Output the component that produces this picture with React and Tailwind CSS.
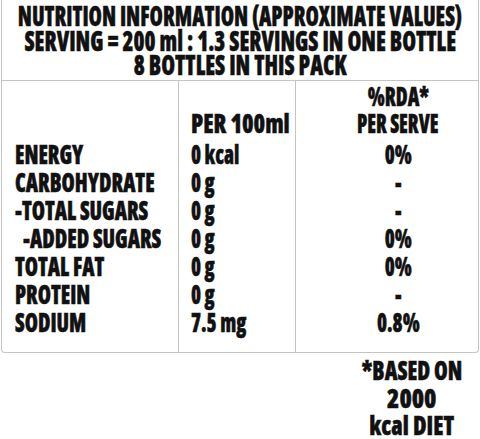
const rows = [
  { label: "ENERGY", per100: "0 kcal", rda: "0%" },
  { label: "CARBOHYDRATE", per100: "0 g", rda: "-" },
  { label: "-TOTAL SUGARS", per100: "0 g", rda: "-" },
  { label: "-ADDED SUGARS", per100: "0 g", rda: "0%", indent: true },
  { label: "TOTAL FAT", per100: "0 g", rda: "0%" },
  { label: "PROTEIN", per100: "0 g", rda: "-" },
  { label: "SODIUM", per100: "7.5 mg", rda: "0.8%" },
];

// the face is squeezed horizontally to get the condensed look
const squeeze = {
  title: "scale-x-[0.743]",
  sub: "scale-x-[0.77]",
  label: "scale-x-[0.82]",
  value: "scale-x-[0.78]",
  head: "scale-x-[0.9]",
  serve: "scale-x-[0.76]",
  note: "scale-x-[0.85]",
  num: "scale-x-[0.96]",
  diet: "scale-x-[0.89]",
};

function Left({ s = "value", children }) {
  return <span className={`inline-block origin-left ${squeeze[s]}`}>{children}</span>;
}

function Mid({ s = "value", children }) {
  return (
    <div className="flex justify-center">
      <span className={`inline-block origin-center ${squeeze[s]}`}>{children}</span>
    </div>
  );
}

export default function App() {
  return (
    <div
      className="w-[480px] h-[439px] bg-white text-[#111] font-extrabold font-stretch-condensed [-webkit-text-stroke:0.5px_#111] overflow-hidden whitespace-nowrap"
      style={{ fontFamily: '"Open Sans", "Open Sans Condensed", sans-serif' }}
    >
      <div className="ml-[1px] w-[478px] border-x border-b border-[#c4c4c4] rounded-b-[4px]">
        {/* title block */}
        <div className="h-[81px] border-b border-[#c4c4c4] pt-[3px] text-[29px] leading-[24.5px]">
          <Mid s="title">NUTRITION INFORMATION (APPROXIMATE VALUES)</Mid>
          <Mid s="sub">SERVING = 200 ml : 1.3 SERVINGS IN ONE BOTTLE</Mid>
          <Mid s="sub">8 BOTTLES IN THIS PACK</Mid>
        </div>

        <div className="grid grid-cols-[176px_117px_1fr] text-[26px] leading-[28px]">
          {/* column labels */}
          <div />
          <div className="flex items-end border-l border-[#c4c4c4] pl-[12px] pt-[2px] pb-[3px] leading-[27px]">
            <Left s="head">PER 100ml</Left>
          </div>
          <div className="border-l border-[#c4c4c4] pl-[22px] pt-[2px] pb-[3px] leading-[27px]">
            <Mid>%RDA*</Mid>
            <Mid s="serve">PER SERVE</Mid>
          </div>

          {/* values */}
          <div className="pl-[13px] pb-[16px]">
            {rows.map((r) => (
              <div key={r.label} className={r.indent ? "pl-[8px]" : ""}>
                <Left s="label">{r.label}</Left>
              </div>
            ))}
          </div>
          <div className="border-l border-[#c4c4c4] pl-[12px] pb-[16px]">
            {rows.map((r) => (
              <div key={r.label}>
                <Left>{r.per100}</Left>
              </div>
            ))}
          </div>
          <div className="border-l border-[#c4c4c4] pl-[22px] pb-[16px]">
            {rows.map((r) => (
              <Mid key={r.label}>{r.rda}</Mid>
            ))}
          </div>
        </div>
      </div>

      {/* footnote */}
      <div className="ml-[347px] w-[130px] pt-[4px] text-[26px] leading-[27.5px]">
        <Mid s="note">*BASED ON</Mid>
        <Mid s="num">2000</Mid>
        <Mid s="diet">kcal DIET</Mid>
      </div>
    </div>
  );
}
